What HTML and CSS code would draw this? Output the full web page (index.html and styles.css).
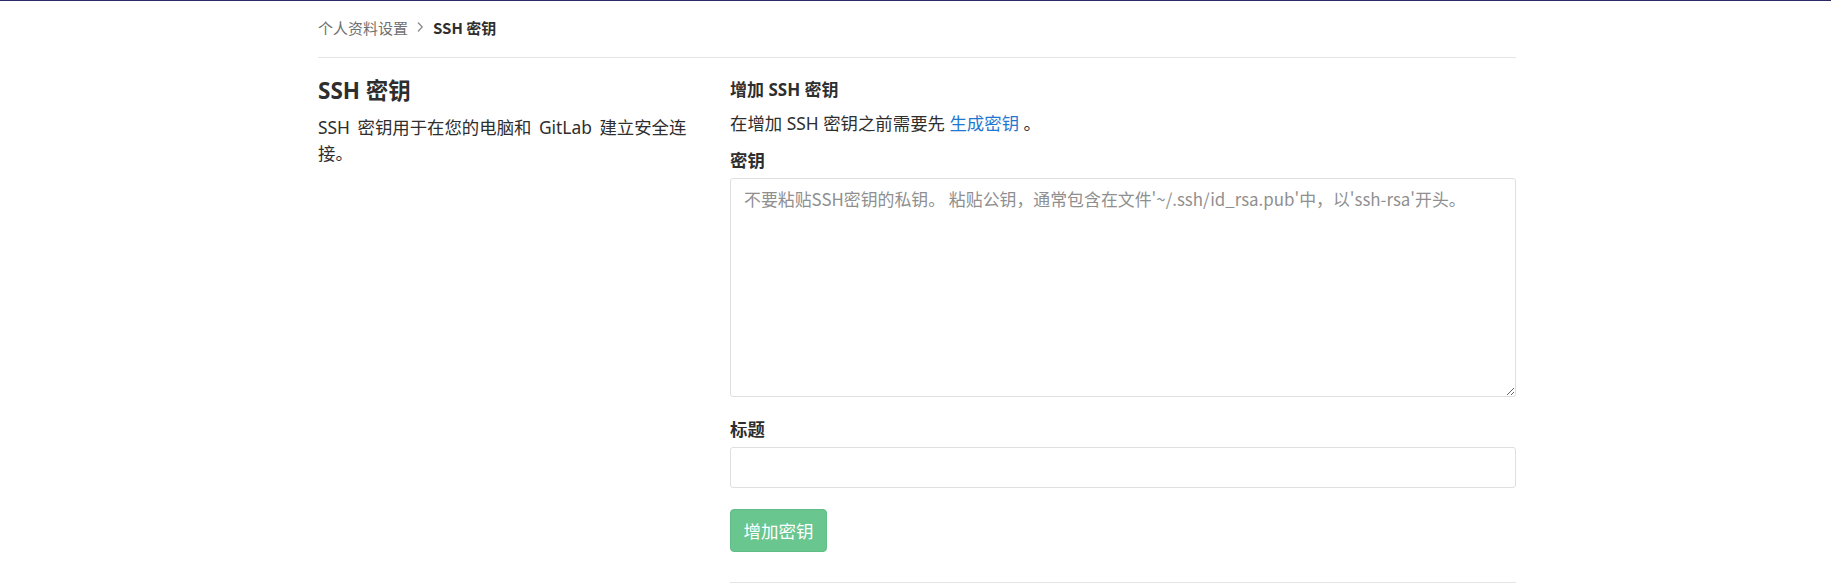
FILE: index.html
```html
<!DOCTYPE html>
<html lang="zh-CN">
<head>
<meta charset="utf-8">
<title>SSH 密钥</title>
<link rel="stylesheet" href="styles.css">
</head>
<body>
<div class="topline"></div>
<div class="container">
  <nav class="breadcrumbs">
    <a class="crumb-link" href="#">个人资料设置</a>
    <svg class="chevron" width="8" height="12" viewBox="0 0 8 12"><path d="M2 1.5 L6.2 6 L2 10.5" fill="none" stroke="#8c8c8c" stroke-width="1.3"/></svg>
    <span class="crumb-current">SSH 密钥</span>
  </nav>
  <div class="row">
    <div class="col-left">
      <h4 class="section-title">SSH 密钥</h4>
      <p class="section-desc">SSH 密钥用于在您的电脑和 GitLab 建立安全连接。</p>
    </div>
    <div class="col-right">
      <h5 class="form-title">增加 SSH 密钥</h5>
      <p class="form-intro">在增加 SSH 密钥之前需要先 <a class="link" href="#">生成密钥</a> 。</p>
      <label class="field-label" for="key">密钥</label>
      <textarea id="key" class="textarea" placeholder="不要粘贴SSH密钥的私钥。 粘贴公钥，通常包含在文件'~/.ssh/id_rsa.pub'中，以'ssh-rsa'开头。"></textarea>
      <label class="field-label title-label" for="title">标题</label>
      <input id="title" class="input" type="text">
      <div class="actions">
        <button class="btn-success" type="button" disabled>增加密钥</button>
      </div>
      <hr class="divider">
    </div>
  </div>
</div>
</body>
</html>
```
FILE: styles.css
```css
* { box-sizing: border-box; }
html, body { margin: 0; padding: 0; background: #fff; }
body {
  font-family: "Noto Sans", "Noto Sans CJK SC", sans-serif;
  font-size: 17.4px;
  line-height: 25px;
  color: #2e2e2e;
  overflow: hidden;
}
.topline { height: 1px; background: #2b2a66; }
.container { width: 1198px; margin-left: 318px; }
.breadcrumbs {
  height: 57px;
  border-bottom: 1px solid #e5e5e5;
  display: flex;
  align-items: center;
  padding-bottom: 4px;
  font-size: 15px;
  font-family: "Noto Sans CJK SC", sans-serif;
}
.crumb-link { color: #707070; text-decoration: none; }
.chevron { margin: 0 9px 0 8px; }
.crumb-current { color: #2e2e2e; font-weight: 700; }
.row { display: flex; gap: 37px; padding-top: 19px; }
.col-left { width: 375px; flex: none; }
.col-right { flex: 1; display: flex; flex-direction: column; align-items: flex-start; }
.section-title {
  margin: 0;
  font-size: 22.5px;
  line-height: 27px;
  font-weight: 700;
}
.section-desc { margin: 10px 0 0; line-height: 26px; word-spacing: 3px; }
.form-title { margin: 0; font-size: 17px; line-height: 25px; font-weight: 700; }
.form-intro { margin: 9px 0 0; }
.link { color: #1f78d1; text-decoration: none; }
.field-label { display: block; margin-top: 12px; font-weight: 700; }
.textarea {
  display: block;
  width: 100%;
  height: 219px;
  margin-top: 5px;
  border: 1px solid #dfdfdf;
  border-radius: 3px;
  padding: 8px 13px;
  font-family: "Noto Sans CJK SC", sans-serif;
  font-size: 16.9px;
  line-height: 24px;
  color: #2e2e2e;
  resize: vertical;
}
.textarea::placeholder { color: #8f8f8f; }
.title-label { margin-top: 20px; }
.input {
  display: block;
  width: 100%;
  height: 41px;
  margin-top: 5px;
  border: 1px solid #dfdfdf;
  border-radius: 3px;
}
.actions { margin-top: 21px; }
.btn-success {
  width: 97px;
  height: 43px;
  border: 1px solid #5fbd86;
  border-radius: 4px;
  background: #69c68f;
  color: #fff;
  font-family: "Noto Sans CJK SC", sans-serif;
  font-size: 17.5px;
  padding: 0;
}
.divider {
  width: 100%;
  margin: 30px 0 0;
  border: 0;
  border-top: 1px solid #e5e5e5;
}
```
